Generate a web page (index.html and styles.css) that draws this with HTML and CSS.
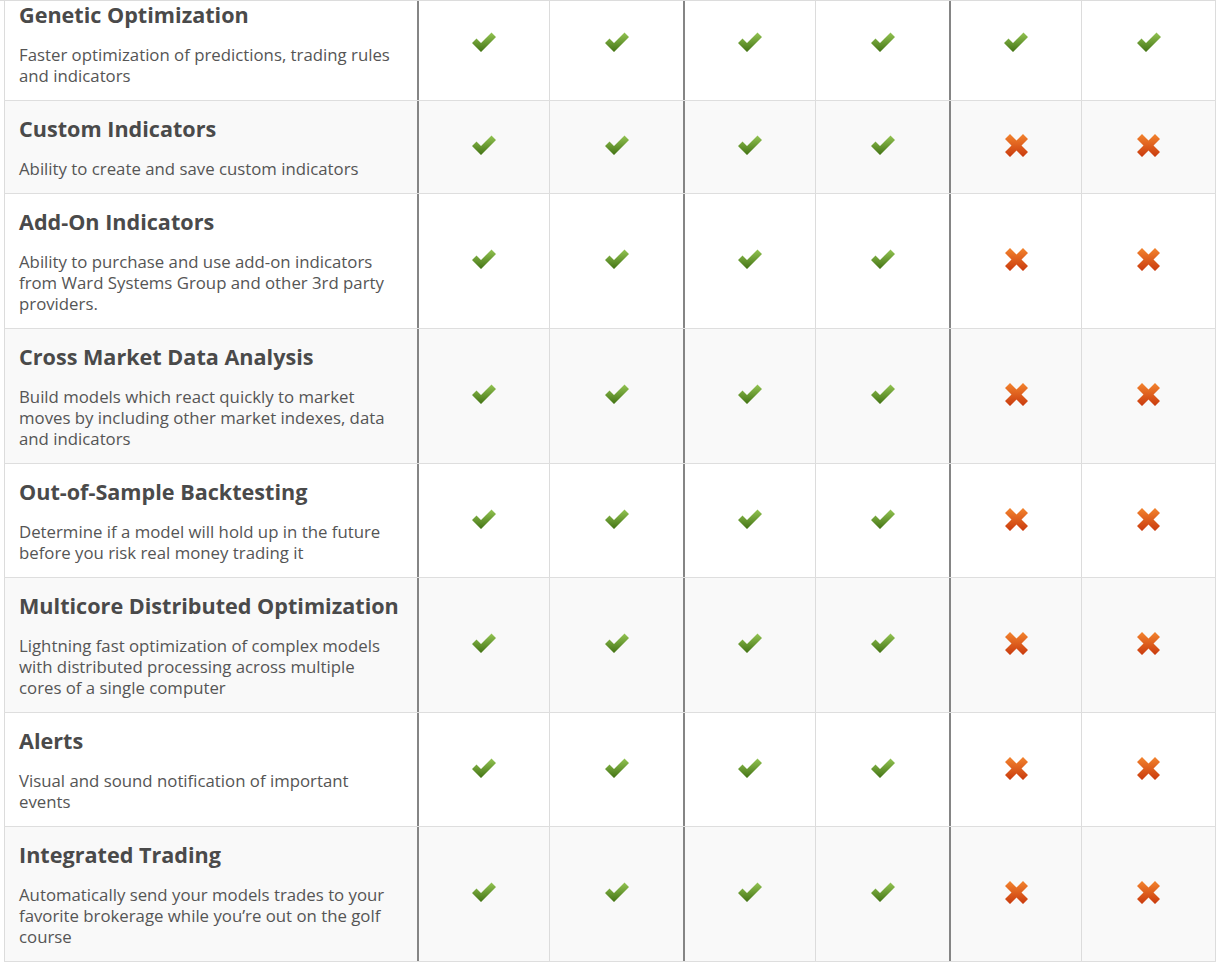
FILE: index.html
```html
<!DOCTYPE html>
<html>
<head>
<meta charset="utf-8">
<link rel="stylesheet" href="styles.css">
</head>
<body>
<svg width="0" height="0" class="defs">
  <defs>
    <linearGradient id="g" x1="0" y1="0" x2="0" y2="1">
      <stop offset="0" stop-color="#93c452"/>
      <stop offset="1" stop-color="#437315"/>
    </linearGradient>
    <linearGradient id="o" x1="0" y1="0" x2="0" y2="1">
      <stop offset="0" stop-color="#f3842e"/>
      <stop offset="1" stop-color="#c93a0e"/>
    </linearGradient>
    <symbol id="ck" viewBox="0 0 26 21"><path d="M1 11 L5.5 6.5 L10 11 L20.5 0.5 L25 5 L10 20 Z" fill="url(#g)"/></symbol>
    <symbol id="cx" viewBox="0 0 23 23"><path d="M0 5 L5 0 L11.5 6.5 L18 0 L23 5 L16.5 11.5 L23 18 L18 23 L11.5 16.5 L5 23 L0 18 L6.5 11.5 Z" fill="url(#o)"/></symbol>
  </defs>
</svg>
<div class="topline"></div>
<div class="table">
  <div class="row">
    <div class="feat"><h3>Genetic Optimization</h3><p>Faster optimization of predictions, trading rules and indicators</p></div>
    <div class="c dark"><svg class="ok"><use href="#ck"/></svg></div>
    <div class="c"><svg class="ok"><use href="#ck"/></svg></div>
    <div class="c dark"><svg class="ok"><use href="#ck"/></svg></div>
    <div class="c"><svg class="ok"><use href="#ck"/></svg></div>
    <div class="c dark"><svg class="ok"><use href="#ck"/></svg></div>
    <div class="c last"><svg class="ok"><use href="#ck"/></svg></div>
  </div>
  <div class="row alt">
    <div class="feat"><h3>Custom Indicators</h3><p>Ability to create and save custom indicators</p></div>
    <div class="c dark"><svg class="ok"><use href="#ck"/></svg></div>
    <div class="c"><svg class="ok"><use href="#ck"/></svg></div>
    <div class="c dark"><svg class="ok"><use href="#ck"/></svg></div>
    <div class="c"><svg class="ok"><use href="#ck"/></svg></div>
    <div class="c dark"><svg class="no"><use href="#cx"/></svg></div>
    <div class="c last"><svg class="no"><use href="#cx"/></svg></div>
  </div>
  <div class="row">
    <div class="feat"><h3>Add-On Indicators</h3><p>Ability to purchase and use add-on indicators from Ward Systems Group and other 3rd party providers.</p></div>
    <div class="c dark"><svg class="ok"><use href="#ck"/></svg></div>
    <div class="c"><svg class="ok"><use href="#ck"/></svg></div>
    <div class="c dark"><svg class="ok"><use href="#ck"/></svg></div>
    <div class="c"><svg class="ok"><use href="#ck"/></svg></div>
    <div class="c dark"><svg class="no"><use href="#cx"/></svg></div>
    <div class="c last"><svg class="no"><use href="#cx"/></svg></div>
  </div>
  <div class="row alt">
    <div class="feat"><h3>Cross Market Data Analysis</h3><p>Build models which react quickly to market moves by including other market indexes, data and indicators</p></div>
    <div class="c dark"><svg class="ok"><use href="#ck"/></svg></div>
    <div class="c"><svg class="ok"><use href="#ck"/></svg></div>
    <div class="c dark"><svg class="ok"><use href="#ck"/></svg></div>
    <div class="c"><svg class="ok"><use href="#ck"/></svg></div>
    <div class="c dark"><svg class="no"><use href="#cx"/></svg></div>
    <div class="c last"><svg class="no"><use href="#cx"/></svg></div>
  </div>
  <div class="row">
    <div class="feat"><h3>Out-of-Sample Backtesting</h3><p>Determine if a model will hold up in the future before you risk real money trading it</p></div>
    <div class="c dark"><svg class="ok"><use href="#ck"/></svg></div>
    <div class="c"><svg class="ok"><use href="#ck"/></svg></div>
    <div class="c dark"><svg class="ok"><use href="#ck"/></svg></div>
    <div class="c"><svg class="ok"><use href="#ck"/></svg></div>
    <div class="c dark"><svg class="no"><use href="#cx"/></svg></div>
    <div class="c last"><svg class="no"><use href="#cx"/></svg></div>
  </div>
  <div class="row alt">
    <div class="feat"><h3>Multicore Distributed Optimization</h3><p>Lightning fast optimization of complex models with distributed processing across multiple cores of a single computer</p></div>
    <div class="c dark"><svg class="ok"><use href="#ck"/></svg></div>
    <div class="c"><svg class="ok"><use href="#ck"/></svg></div>
    <div class="c dark"><svg class="ok"><use href="#ck"/></svg></div>
    <div class="c"><svg class="ok"><use href="#ck"/></svg></div>
    <div class="c dark"><svg class="no"><use href="#cx"/></svg></div>
    <div class="c last"><svg class="no"><use href="#cx"/></svg></div>
  </div>
  <div class="row">
    <div class="feat"><h3>Alerts</h3><p>Visual and sound notification of important events</p></div>
    <div class="c dark"><svg class="ok"><use href="#ck"/></svg></div>
    <div class="c"><svg class="ok"><use href="#ck"/></svg></div>
    <div class="c dark"><svg class="ok"><use href="#ck"/></svg></div>
    <div class="c"><svg class="ok"><use href="#ck"/></svg></div>
    <div class="c dark"><svg class="no"><use href="#cx"/></svg></div>
    <div class="c last"><svg class="no"><use href="#cx"/></svg></div>
  </div>
  <div class="row alt">
    <div class="feat"><h3>Integrated Trading</h3><p>Automatically send your models trades to your favorite brokerage while you’re out on the golf course</p></div>
    <div class="c dark"><svg class="ok"><use href="#ck"/></svg></div>
    <div class="c"><svg class="ok"><use href="#ck"/></svg></div>
    <div class="c dark"><svg class="ok"><use href="#ck"/></svg></div>
    <div class="c"><svg class="ok"><use href="#ck"/></svg></div>
    <div class="c dark"><svg class="no"><use href="#cx"/></svg></div>
    <div class="c last"><svg class="no"><use href="#cx"/></svg></div>
  </div>
</div>
</body>
</html>
```
FILE: styles.css
```css
html, body {
  margin: 0;
  padding: 0;
  background: #fff;
  overflow: hidden;
}
body {
  font-family: "Open Sans", "Liberation Sans", sans-serif;
  color: #555;
}
.defs {
  position: absolute;
  width: 0;
  height: 0;
}
.topline {
  position: fixed;
  top: 0;
  left: 0;
  right: 0;
  height: 1px;
  background: #dcdcdc;
  z-index: 2;
}
.table {
  margin: -13px 0 0 4px;
  width: 1212px;
}
.row {
  display: grid;
  grid-template-columns: 413px 132px 134px 132px 134px 132px 135px;
  border-bottom: 1px solid #dedede;
  background: #fff;
}
.row.alt {
  background: #f9f9f9;
}
.row > div {
  box-sizing: border-box;
  border-left: 1px solid #dcdcdc;
}
.row > .c.dark {
  border-left: 2px solid #858585;
}
.row > .c.last {
  border-right: 1px solid #dcdcdc;
}
.feat {
  padding: 14px 24px 14px 14px;
}
.feat h3 {
  margin: 0 0 15px;
  font-size: 21.6px;
  line-height: 28px;
  font-weight: 700;
  color: #4a4a4a;
  white-space: nowrap;
}
.feat p {
  margin: 0;
  font-size: 16.8px;
  line-height: 21px;
  color: #555;
}
.c {
  display: flex;
  align-items: center;
  justify-content: center;
  padding-bottom: 3px;
}
.ok {
  width: 26px;
  height: 21px;
}
.no {
  width: 23px;
  height: 23px;
}
```
